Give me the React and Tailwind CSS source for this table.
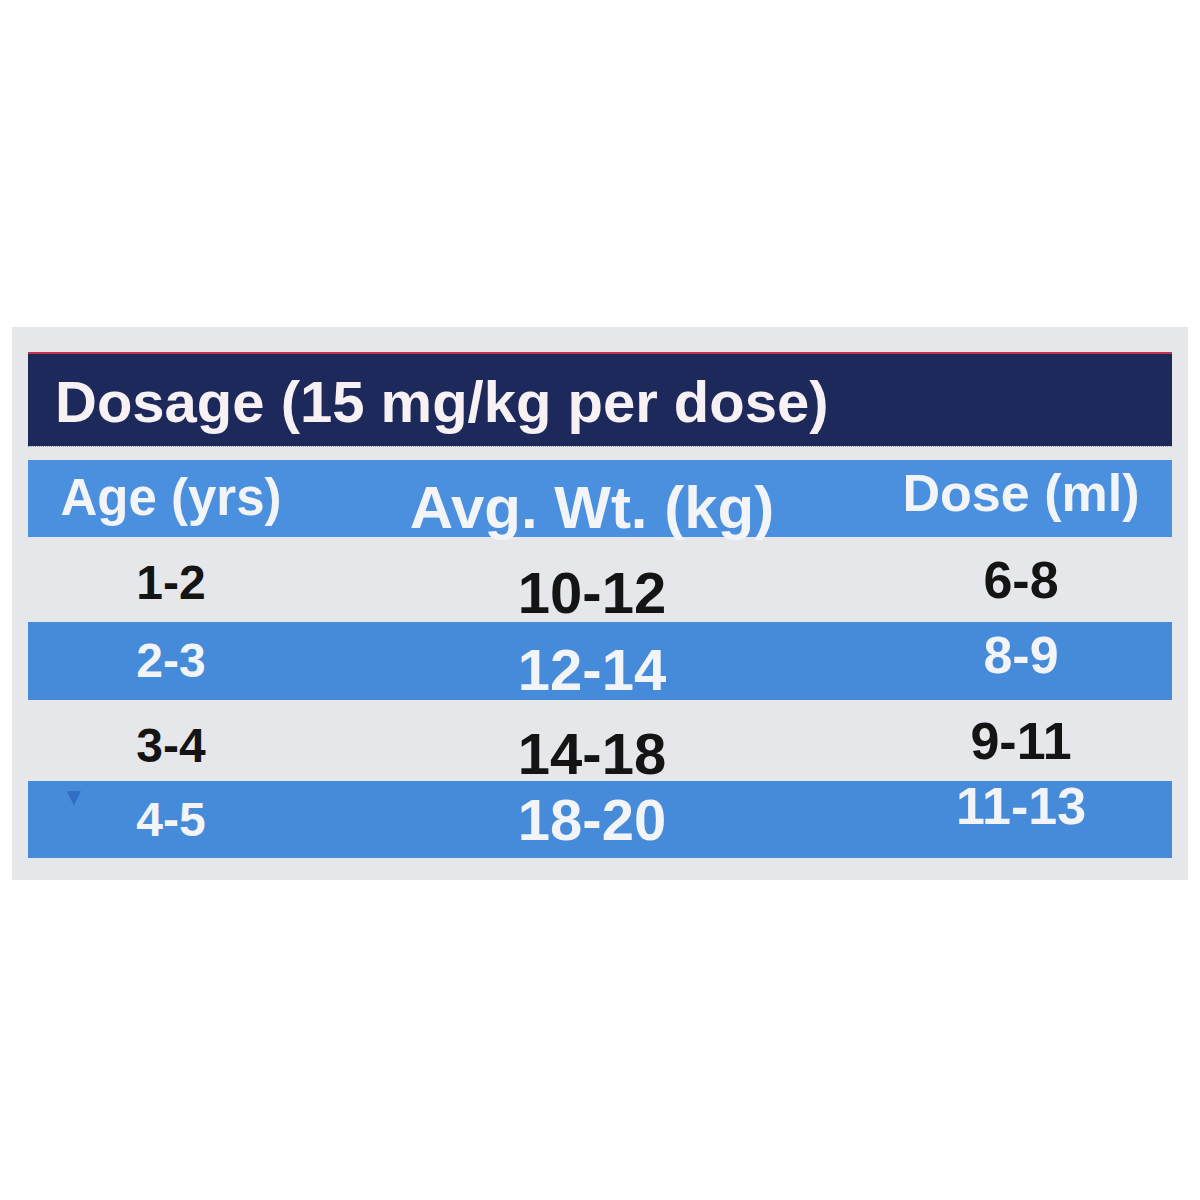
import React from 'react';

const rows = [
  { cells: ['1-2', '10-12', '6-8'], band: false, shift: ['translate-y-[3px]', 'translate-y-[13px]', 'translate-y-0'] },
  { cells: ['2-3', '12-14', '8-9'], band: true, shift: ['translate-y-0', 'translate-y-[9px]', '-translate-y-[6px]'] },
  { cells: ['3-4', '14-18', '9-11'], band: false, shift: ['translate-y-[5px]', 'translate-y-[13px]', 'translate-y-0'] },
  { cells: ['4-5', '18-20', '11-13'], band: true, shift: ['translate-y-0', 'translate-y-0', '-translate-y-[14px]'] },
];

function Row({ cells, band, shift, height, mark }) {
  return (
    <div
      className={`relative grid grid-cols-[286px_556px_1fr] items-center font-bold leading-none ${height} ${
        band ? 'bg-[#468bd9] text-[#f2f4f7]' : 'text-[#141414]'
      }`}
    >
      {mark && (
        <span className="absolute left-[34px] top-[4px] text-[24px] leading-none text-[#2f6ec2]">▼</span>
      )}
      <div className={`text-center text-[48px] ${shift[0]}`}>{cells[0]}</div>
      <div className={`text-center text-[58px] ${shift[1]}`}>{cells[1]}</div>
      <div className={`text-center text-[52px] ${shift[2]}`}>{cells[2]}</div>
    </div>
  );
}

export default function App() {
  return (
    <div
      className="min-h-[1200px] bg-white px-3 pt-[327px]"
      style={{ fontFamily: '"Liberation Sans", Arial, sans-serif' }}
    >
      <div className="bg-[#e6e7eb] px-4 pt-[25px] pb-[22px]">
        {/* Title bar */}
        <div className="h-[94px] border-t-2 border-[#c2334f] bg-[#1d295b] flex items-center pl-[27px]">
          <span className="text-[58px] font-bold leading-none text-[#f7f1f3] translate-y-[2px]">
            Dosage (15 mg/kg per dose)
          </span>
        </div>

        <div className="h-[14px] border-t border-dotted border-[#9aa7c4]"></div>

        {/* Column headings */}
        <div className="h-[77px] grid grid-cols-[286px_556px_1fr] items-center bg-[#4a90de] font-bold leading-none text-[#f2f4f7]">
          <div className="text-center text-[51px] -translate-y-[1px]">Age (yrs)</div>
          <div className="text-center text-[60px] translate-y-[9px]">Avg. Wt. (kg)</div>
          <div className="text-center text-[52px] -translate-y-[6px]">Dose (ml)</div>
        </div>

        <Row {...rows[0]} height="h-[85px]" />
        <Row {...rows[1]} height="h-[78px]" />
        <Row {...rows[2]} height="h-[81px]" />
        <Row {...rows[3]} height="h-[77px]" mark />
      </div>
    </div>
  );
}
